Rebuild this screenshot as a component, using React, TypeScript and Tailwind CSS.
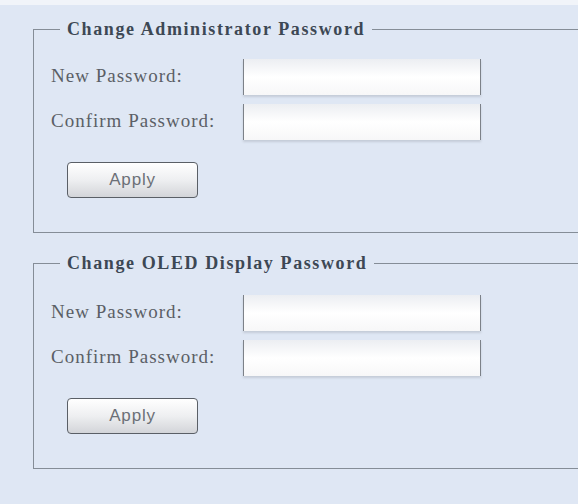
import React from 'react';

const PasswordField: React.FC<{ label: string }> = ({ label }) => (
  <div className="flex items-center h-[37px]">
    <label className="w-[192px] font-['Liberation_Serif','Times_New_Roman',serif] text-[19px] tracking-[1px] text-[#5b5f66]">
      {label}
    </label>
    <input
      type="password"
      className="w-[238px] h-[36px] border-x border-[#7c8188] bg-gradient-to-b from-[#eceef2] via-white to-[#f7f7f8] shadow-[0_2px_2px_rgba(150,155,165,0.35)] outline-none"
    />
  </div>
);

const PasswordBox: React.FC<{ title: string; top?: string }> = ({ title, top = 'mt-[19px]' }) => (
  <fieldset className="border-y border-l border-[#858d97] pl-[17px] pb-[34px]">
    <legend className="ml-[9px] px-[7px] font-['Liberation_Serif','Times_New_Roman',serif] text-[18px] leading-[20px] font-bold tracking-[1.6px] text-[#3d4854]">
      {title}
    </legend>
    <div className={`${top} flex flex-col gap-[8px]`}>
      <PasswordField label="New Password:" />
      <PasswordField label="Confirm Password:" />
    </div>
    <button className="mt-[22px] ml-[16px] w-[131px] h-[36px] rounded-[4px] border border-[#5a5f66] bg-gradient-to-b from-white via-[#eeeff1] to-[#d3d5d9] font-['Liberation_Sans',Arial,sans-serif] text-[17px] tracking-[0.8px] text-[#6c7077]">
      Apply
    </button>
  </fieldset>
);

export default function App() {
  return (
    <div className="w-[578px] h-[504px] overflow-hidden bg-[#dfe7f4]">
      <div className="h-[5px] bg-[#f1f4f9]" />
      <div className="pl-[33px] pt-[14px] -mr-[10px] flex flex-col gap-[20px]">
        <PasswordBox title="Change Administrator Password" />
        <PasswordBox title="Change OLED Display Password" top="mt-[21px]" />
      </div>
    </div>
  );
}
